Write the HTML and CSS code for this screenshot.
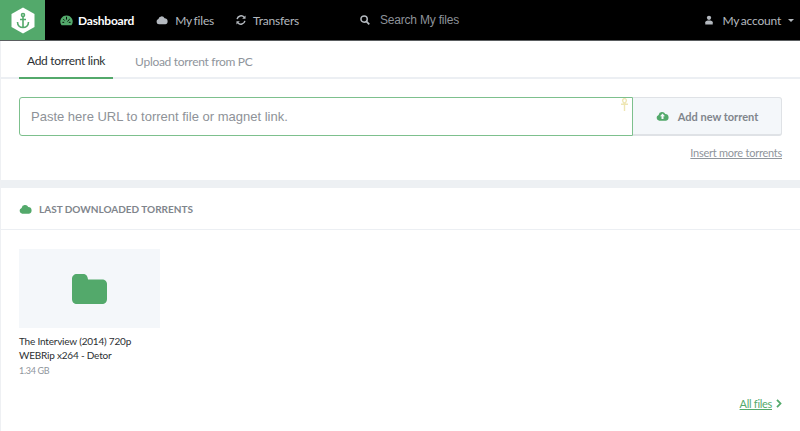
FILE: index.html
```html
<!DOCTYPE html>
<html lang="en">
<head>
<meta charset="utf-8">
<title>Dashboard</title>
<link rel="stylesheet" href="styles.css">
</head>
<body>
<header class="topbar">
  <a class="logo"><svg width="24" height="27" viewBox="0 0 24 27"><path d="M12 .5 L23.500 7 V20 L12 26.500 L.5 20 V7 Z" fill="#fff"/><g fill="none" stroke="#53a96b" stroke-width="1.600"><circle cx="12" cy="8" r="1.500"/><path d="M12 9.500 V20.500 M9 12.500 H15 M6.500 15 C6.500 18.500 9 20.500 12 20.500 C15 20.500 17.500 18.500 17.500 15"/></g></svg></a>
  <nav class="mainnav">
    <a class="navitem active"><svg class="ico green" width="13" height="11" viewBox="0 0 14 12"><path d="M7 0.500 A6.700 6.700 0 0 0 1.600 11.200 H12.400 A6.700 6.700 0 0 0 7 0.500 Z" fill="currentColor"/><path d="M7 2V5M3.500 4.500L5 6M10.500 4.500L8 7M2.500 8H4.500M9.500 8H11.500" stroke="#000" stroke-width="1"/></svg>Dashboard</a>
    <a class="navitem"><svg class="ico" width="12" height="10" viewBox="0 0 13 10"><path d="M3.200 9.700 A3 3 0 0 1 2.600 3.900 A3.600 3.600 0 0 1 9.300 3 A3.400 3.400 0 0 1 10 9.700 Z" fill="currentColor"/></svg>My files</a>
    <a class="navitem"><svg class="ico" width="10" height="10" viewBox="0 0 11 11"><path d="M1.200 4.500 A4.500 4.500 0 0 1 9 2.500 M9.800 6.500 A4.500 4.500 0 0 1 2 8.500" fill="none" stroke="currentColor" stroke-width="1.600"/><path d="M10.500 .5V4.200H6.800ZM.5 10.500V6.800H4.200Z" fill="currentColor"/></svg>Transfers</a>
  </nav>
  <div class="search"><svg width="10" height="10" viewBox="0 0 11 11"><circle cx="4.500" cy="4.500" r="3.500" fill="none" stroke="#b4b9bf" stroke-width="1.600"/><path d="M7 7L10.200 10.200" stroke="#b4b9bf" stroke-width="1.900"/></svg><span>Search My files</span></div>
  <a class="account"><svg class="ico acct" width="8" height="10" viewBox="0 0 9 10"><circle cx="4.500" cy="2.600" r="2.400" fill="currentColor"/><path d="M.3 10V7.600C.3 6.200 2 5.600 4.500 5.600S8.700 6.200 8.700 7.600V10Z" fill="currentColor"/></svg>My account<i class="caret"></i></a>
</header>
<main class="page">
  <div class="tabs">
    <a class="tab active">Add torrent link</a>
    <a class="tab">Upload torrent from PC</a>
  </div>
  <section class="addbox">
    <div class="addrow">
      <div class="urlfield">
        <span class="placeholder">Paste here URL to torrent file or magnet link.</span>
        <svg class="ankh" width="9" height="13" viewBox="0 0 9 13"><path d="M4.500 13V6M1 6.200H8M4.500 5.600C3 4.400 2.600 3.400 2.600 2.500A1.900 1.900 0 0 1 6.400 2.500C6.400 3.400 6 4.400 4.500 5.600Z" fill="none" stroke="#eee6b4" stroke-width="1.400"/></svg>
      </div>
      <a class="addbtn"><svg width="13" height="10" viewBox="0 0 13 10"><path d="M3.200 9.700 A3 3 0 0 1 2.600 3.900 A3.600 3.600 0 0 1 9.300 3 A3.400 3.400 0 0 1 10 9.700 Z" fill="#53a96b"/><path d="M6.500 2.600L9 5.300H7.500V8H5.500V5.300H4Z" fill="#f4f7fa"/></svg>Add new torrent</a>
    </div>
    <div class="morerow"><a class="more">Insert more torrents</a></div>
  </section>
  <section class="last">
    <h2 class="sechead"><svg width="13" height="10" viewBox="0 0 13 10"><path d="M3.200 9.700 A3 3 0 0 1 2.600 3.900 A3.600 3.600 0 0 1 9.300 3 A3.400 3.400 0 0 1 10 9.700 Z" fill="#53a96b"/></svg>LAST DOWNLOADED TORRENTS</h2>
    <div class="files">
      <article class="card">
        <div class="thumb"><svg width="35" height="30" viewBox="0 0 35 30"><path d="M5 0H11C14 0 15.500 1.500 16 5.500H30C33 5.500 35 7.500 35 10V25C35 28 33 30 30 30H5C2 30 0 28 0 25V5C0 2 2 0 5 0Z" fill="#53a96b"/></svg></div>
        <div class="name">The Interview (2014) 720p WEBRip x264 - Detor</div>
        <div class="size">1.34 GB</div>
      </article>
    </div>
    <div class="allrow"><a class="all">All files</a><svg width="6" height="9" viewBox="0 0 6 9"><path d="M1 .8L4.500 4.500L1 8.200" fill="none" stroke="#53a96b" stroke-width="1.800"/></svg></div>
  </section>
</main>
</body>
</html>
```
FILE: styles.css
```css
* { box-sizing: border-box; }
html, body { margin: 0; height: 100%; }
body { width: 800px; height: 431px; overflow: hidden; background: #fff; font-family: Lato, "Noto Sans", sans-serif; font-size: 12px; color: #2b2f33; }
a { color: inherit; text-decoration: none; }

.topbar { display: flex; align-items: center; height: 41px; background: #000; border-bottom: 1px solid #5a5d60; color: #b4b9bf; }
.logo { display: flex; align-items: center; justify-content: center; width: 45px; height: 40px; background: #53a96b; }
.mainnav { display: flex; align-items: center; margin-left: 15px; gap: 22px; width: 300px; }
.navitem { display: flex; align-items: center; font-size: 12px; letter-spacing: -0.2px; word-spacing: -1px; }
.navitem.active { color: #fff; font-weight: 700; }
.ico { margin-right: 7px; color: #b4b9bf; flex: none; }
.ico.green { color: #53a96b; margin-right: 5px; }
.ico.acct { margin-right: 9px; }
.search { display: flex; align-items: center; gap: 10px; font-family: "Liberation Sans", sans-serif; font-size: 12px; letter-spacing: -0.2px; color: #8d9299; }
.account { display: flex; align-items: center; margin-left: auto; margin-right: 6px; font-size: 12px; word-spacing: -1px; letter-spacing: -0.2px; }
.caret { width: 0; height: 0; margin-left: 7px; border: 3.500px solid transparent; border-top-color: #b4b9bf; border-bottom-width: 0; }

.page { border-left: 1px solid #eef0f3; height: 390px; }
.tabs { display: flex; height: 38px; padding-left: 18px; border-bottom: 2px solid #eceff3; }
.tab { display: flex; align-items: center; height: 38px; padding: 3px 8px 0; margin-right: 14px; font-size: 12px; letter-spacing: -0.3px; color: #8f959c; }
.tab.active { color: #2b2f33; border-bottom: 2px solid #53a96b; }

.addbox { height: 101px; padding: 18px 18px 0; }
.addrow { display: flex; height: 39px; }
.urlfield { position: relative; flex: 1; display: flex; align-items: center; padding-left: 11px; border: 1px solid #7dc08d; border-radius: 3px 0 0 3px; }
.placeholder { font-family: "Liberation Sans", sans-serif; font-size: 13px; color: #8e9298; }
.ankh { position: absolute; top: 0; right: 3px; }
.addbtn { display: flex; align-items: center; justify-content: center; gap: 9px; width: 149px; background: #f4f7fa; border: 1px solid #dfe2e6; border-bottom-width: 2px; border-left: 0; border-radius: 0 3px 3px 0; font-size: 11px; font-weight: 700; color: #80858c; }
.morerow { display: flex; justify-content: flex-end; margin-top: 10px; }
.more { font-size: 11px; letter-spacing: -0.25px; color: #8f959c; text-decoration: underline; }

.last { border-top: 8px solid #edf0f3; }
.sechead { display: flex; align-items: center; gap: 7px; height: 42px; margin: 0; padding-left: 18px; border-bottom: 1px solid #eceff3; font-size: 10px; font-weight: 700; color: #80858c; }
.files { padding: 19px 18px 0; }
.card { width: 141px; }
.thumb { display: flex; align-items: center; justify-content: center; height: 79px; background: #f4f7fa; }
.name { margin-top: 6px; font-size: 10px; letter-spacing: -0.2px; line-height: 14px; color: #2b2f33; }
.size { margin-top: 3px; font-size: 9px; letter-spacing: -0.3px; color: #8f959c; }
.allrow { display: flex; align-items: center; justify-content: flex-end; gap: 4px; margin-top: 21px; padding-right: 18px; }
.all { font-size: 11px; letter-spacing: -0.3px; color: #53a96b; text-decoration: underline; }
```
